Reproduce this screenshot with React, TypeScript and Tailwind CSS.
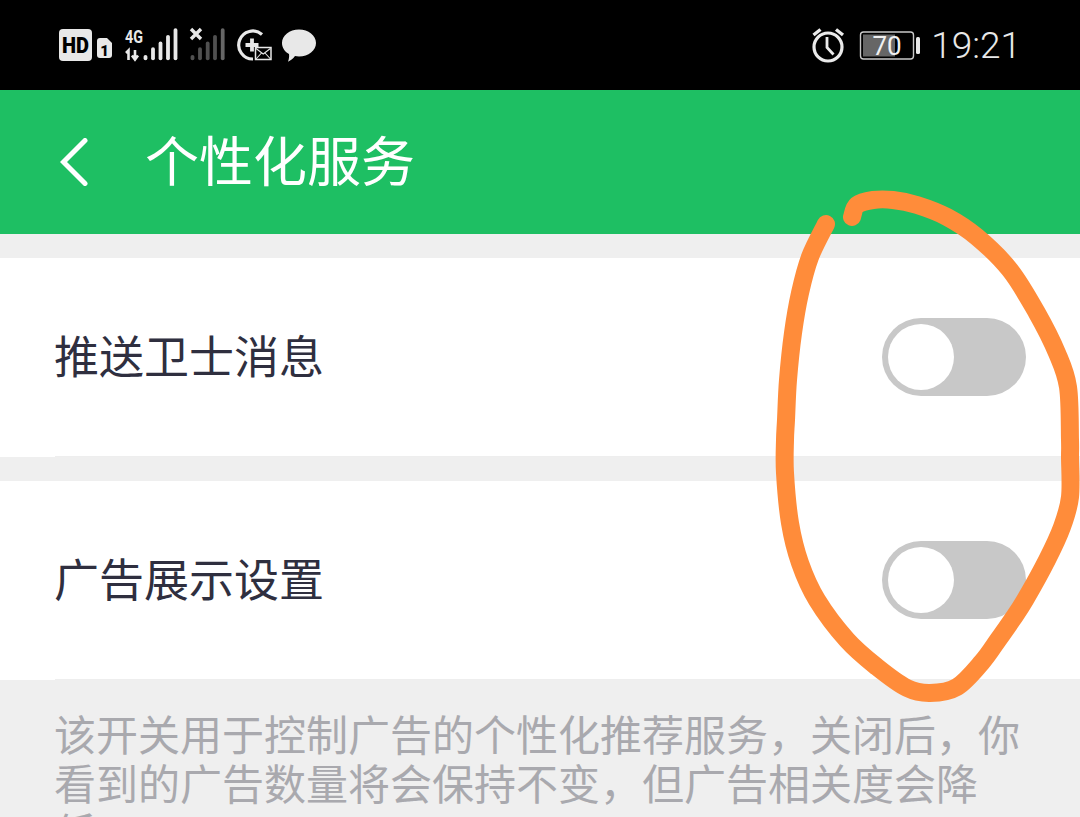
const CJK = "font-['Noto_Sans_CJK_SC','Noto_Sans',sans-serif]";

const stroke1: [number, number][] = [[826,224],[810,257],[800,293],[793,333],[788,380],[786,420],[785,440],[785,473],[790,523],[800,563],[817,600],[847,640],[877,667],[907,688],[930,693],[957,687],[982,662],[998,640],[1012,620],[1025,600],[1047,560],[1062,527],[1070,497],[1070,457],[1070,440],[1068,387],[1057,353],[1037,313],[1010,270],[977,237],[947,217],[917,205],[893,200],[873,200],[857,205],[852,217]];

function smooth(p: [number, number][]) {
  let d = `M${p[0][0]} ${p[0][1]}`;
  for (let i = 0; i < p.length - 1; i++) {
    const a = p[Math.max(i - 1, 0)], b = p[i], c = p[i + 1], e = p[Math.min(i + 2, p.length - 1)];
    d += ` C${b[0] + (c[0] - a[0]) / 6} ${b[1] + (c[1] - a[1]) / 6} ${c[0] - (e[0] - b[0]) / 6} ${c[1] - (e[1] - b[1]) / 6} ${c[0]} ${c[1]}`;
  }
  return d;
}

function LeftIcons() {
  const xs1 = [145.5, 153, 160.5, 168, 175.5];
  const xs2 = [192.5, 200, 207.7, 215, 222.7];
  const tops = [55, 47.3, 41.7, 35, 28.3];
  return (
    <svg width="300" height="70" viewBox="40 10 300 70" fill="none">
      <rect x="59" y="29" width="33" height="32" rx="4" fill="#e8e8e8" />
      <text x="75.5" y="53" textAnchor="middle" fontFamily="Roboto" fontWeight="900" fontSize="22" fill="#000" textLength="27" lengthAdjust="spacingAndGlyphs">HD</text>
      <path d="M97 41 a3 3 0 0 1 3-3 h7 l5 5 v12 a3 3 0 0 1-3 3 h-9 a3 3 0 0 1-3-3z" fill="#e8e8e8" />
      <text x="104.5" y="55.500" textAnchor="middle" fontFamily="Roboto" fontWeight="900" fontSize="15" fill="#000">1</text>
      <text x="125" y="43" fontFamily="Roboto" fontWeight="700" fontSize="18" fill="#e8e8e8" textLength="18" lengthAdjust="spacingAndGlyphs">4G</text>
      <path d="M126 53 l2.500-2.500 v9.500 M135 50 v9 m-3-3.500 l3 4 l3-4" stroke="#e8e8e8" strokeWidth="2.600" />
      {xs1.map((x, i) => (
        <line key={i} x1={x} x2={x} y1={tops[i] + 1.8} y2="58.300" stroke="#e8e8e8" strokeWidth="3.800" strokeLinecap="round" />
      ))}
      <path d="M191 29 L201 39 M201 29 L191 39" stroke="#e8e8e8" strokeWidth="3.400" />
      {xs2.map((x, i) => (
        <line key={i} x1={x} x2={x} y1={tops[i] + 1.8} y2="58.300" stroke={i === 4 ? "#666" : "#505050"} strokeWidth="3.800" strokeLinecap="round" />
      ))}
      <path d="M262 34.500 A14 14 0 1 0 253 59" stroke="#e8e8e8" strokeWidth="3.200" />
      <path d="M245.500 45 h13 M252 38.500 v13" stroke="#e8e8e8" strokeWidth="3.800" />
      <rect x="255.500" y="47.500" width="15.500" height="12" fill="#000" stroke="#e8e8e8" strokeWidth="1.500" />
      <path d="M256 48.500 l7.200 5.500 l7.200-5.500 M256 59 l5.500-6 M270.500 59 l-5.500-6" stroke="#e8e8e8" strokeWidth="1.100" />
      <path d="M299 29.500 c9.500 0 17 6 17 13.500 s-7.500 13.500-17 13.500 c-1.500 0-2.800-.1-4-.4 c-1.700 2.500-4 4.500-7 5.600 c1-2.500 1.400-5 1-7.600 c-4.400-2.500-7-6.500-7-11.100 c0-7.500 7.500-13.500 17-13.500z" fill="#e8e8e8" />
    </svg>
  );
}

function RightIcons() {
  return (
    <svg width="135" height="70" viewBox="790 10 135 70" fill="none">
      <circle cx="828" cy="47" r="14" stroke="#eaeaea" strokeWidth="3.200" />
      <path d="M827 37 v10.500 l6.500 7" stroke="#eaeaea" strokeWidth="2.800" />
      <path d="M813.500 35 l7-5.500 M843 35 l-7-5.500" stroke="#eaeaea" strokeWidth="3.400" />
      <rect x="860.500" y="32" width="53" height="27" rx="3" stroke="#c8c8c8" strokeWidth="1.400" />
      <rect x="863" y="34.500" width="32" height="22" fill="#666" />
      <rect x="916" y="37" width="4" height="17" rx="1.500" fill="#e8e8e8" />
      <text x="887" y="55" textAnchor="middle" fontFamily="Roboto" fontWeight="400" fontSize="26" fill="#f0f0f0">70</text>
    </svg>
  );
}

function Toggle() {
  return (
    <div className="w-[144px] h-[78px] rounded-full bg-[#c8c8c8] p-[6px]">
      <div className="w-[66px] h-[66px] rounded-full bg-white" />
    </div>
  );
}

function Row({ label }: { label: string }) {
  return (
    <div className="bg-white h-[199px] flex flex-col">
      <div className="flex-1 flex items-center justify-between pl-[54px] pr-[54px]">
        <span className="text-[45px] leading-[60px] text-[#2f2f3f] -translate-y-[2px]">{label}</span>
        <Toggle />
      </div>
      <div className="ml-[55px] h-px bg-[#eeeeee]" />
    </div>
  );
}

export default function App() {
  return (
    <div className={`relative w-[1080px] h-[817px] overflow-hidden bg-[#efefef] ${CJK}`}>
      <div className="h-[90px] bg-black flex items-center justify-between pl-[40px] pr-[59px]">
        <LeftIcons />
        <div className="flex items-center">
          <RightIcons />
          <span className="ml-[6px] text-[37px] leading-[70px] font-['Roboto'] text-[#e8e8e8] font-light translate-y-[1px]">19:21</span>
        </div>
      </div>
      <div className="h-[144px] bg-[#1ebf63] flex items-center pl-[60px]">
        <svg width="28" height="48" viewBox="0 0 28 48" fill="none">
          <path d="M25 2.500 L3.500 24 L25 45.500" stroke="#fff" strokeWidth="5" strokeLinecap="round" />
        </svg>
        <span className="ml-[57px] text-[54px] leading-[70px] text-white -translate-y-[3px]">个性化服务</span>
      </div>
      <div className="h-[24px]" />
      <Row label="推送卫士消息" />
      <div className="h-[24px]" />
      <Row label="广告展示设置" />
      <p className="pl-[54px] w-[1030px] pt-[28px] text-[42px] leading-[49px] text-[#a9a9ae]">
        该开关用于控制广告的个性化推荐服务，关闭后，你看到的广告数量将会保持不变，但广告相关度会降低。
      </p>
      <svg className="absolute inset-0" width="1080" height="817" viewBox="0 0 1080 817" fill="none">
        <path d={smooth(stroke1)} stroke="#ff8c3a" strokeWidth="18" strokeLinecap="round" strokeLinejoin="round" />
      </svg>
    </div>
  );
}
